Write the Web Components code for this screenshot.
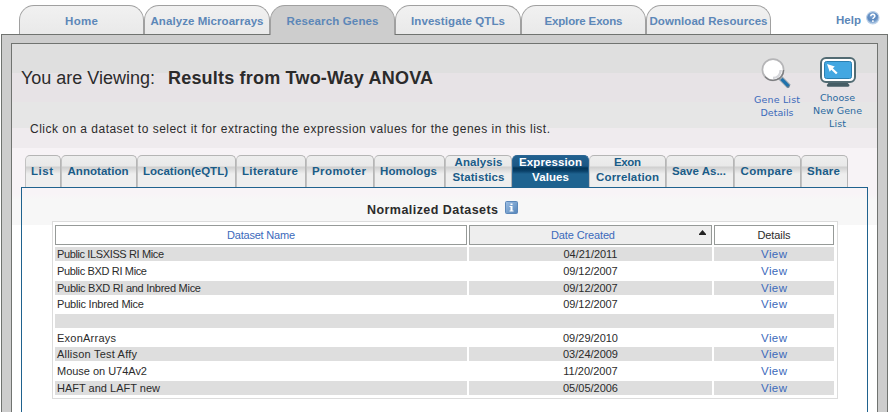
<!DOCTYPE html>
<html lang="en">
<head>
<meta charset="utf-8">
<title>Expression Values</title>
<style>
html,body{margin:0;height:412px;overflow:hidden;background:#fff;font-family:"Liberation Sans",Arial,sans-serif;font-size:11px;color:#2b2b2b}
</style>
</head>
<body>
<gene-page></gene-page>
<script>
const define=(name,html,setup)=>customElements.define(name,class extends HTMLElement{
  connectedCallback(){
    if(this.shadowRoot)return;
    this.attachShadow({mode:'open'}).innerHTML=typeof html==='function'?html(this):html;
    if(setup)setup(this);
  }
});

/* A single line of text tracked out to a given width */
define('fit-text',`<style>:host{display:inline-block;white-space:pre;text-align:left}span{display:inline-block}</style><span><slot></slot></span>`,el=>{
  const s=el.shadowRoot.querySelector('span'),w=+el.getAttribute('w')+1;
  const n=el.textContent.length;
  s.style.letterSpacing=(w-s.getBoundingClientRect().width)/(n-1)+'px';
  el.style.width=w+'px';
});

define('main-tab',`<style>
:host{display:flex;box-sizing:border-box;height:29px;justify-content:center;line-height:13px;padding-top:9px;font-size:11.5px;font-weight:bold;color:#5c87b8;border:1px solid #a0a0a0;border-width:1px 1px 0;border-radius:15px 15px 0 0;background:linear-gradient(#f1f1f1,#e9e9e9)}
:host([active]){background:#cdcdcd;height:30px;position:relative}
</style><slot></slot>`);

define('help-link',`<style>:host{display:flex;align-items:flex-start;gap:5px;font-size:11.5px;font-weight:bold;color:#5c87b8;line-height:13px}fit-text{margin-top:14px}svg{margin-top:11px}</style>
<fit-text w="24">Help</fit-text>
<svg width="14" height="14" viewBox="0 0 14 14"><defs><radialGradient id="g" cx=".45" cy=".3" r=".75"><stop offset="0" stop-color="#7ba4d4"/><stop offset=".55" stop-color="#5c88be"/><stop offset="1" stop-color="#c4daf0"/></radialGradient></defs><circle cx="6.8" cy="6.8" r="6.2" fill="url(#g)" stroke="#bdd2e9" stroke-width="1.1"/><path d="M4.8 5.2C4.9 2.6 9.2 2.8 8.8 5.3C8.6 6.5 6.9 6.6 6.9 8M6.9 9.3V10.9" fill="none" stroke="#fff" stroke-width="1.5"/></svg>`);

define('action-link',`<style>:host{display:flex;flex-direction:column;align-items:center;font:9.5px/13px "DejaVu Sans",sans-serif;color:var(--c)}</style><slot name="icon"></slot><slot></slot>`);

define('magnifier-icon',`<style>:host{display:block;height:35px}svg{display:block}</style>
<svg width="35" height="32" viewBox="0 0 35 32"><path d="M20 19.5L29 28.5" stroke="#98a5ae" stroke-width="5"/><path d="M21.5 21L28.7 28.3" stroke="#1e72ad" stroke-width="3.2"/><path d="M26.2 28.8L29 30L30 27.2" fill="#58748a"/><circle cx="13" cy="11.7" r="10.6" fill="#fff" stroke="#b5b5b7" stroke-width="1.7"/><path d="M5 18.6A10.6 10.6 0 0 0 23.6 12" fill="none" stroke="#7b7b7e" stroke-width="1.3"/><path d="M13 20C18 20 20.5 16 20.7 12" fill="none" stroke="#d5d6da" stroke-width="2.5"/></svg>`);

define('monitor-icon',`<style>:host{display:block;height:34px}svg{display:block}</style>
<svg width="36" height="30" viewBox="0 0 36 30"><path d="M10 24H26L29.5 28Q29.6 29.800 28 29.800H8Q6.500 29.800 6.800 28Z" fill="#455d65"/><rect x="1" y="1" width="34" height="24" rx="5" fill="#fff" stroke="#526b73" stroke-width="2"/><rect x="4.500" y="4.500" width="27" height="17" rx="2" fill="#42a7e1" stroke="#2b7fb0" stroke-width="1"/><path d="M7 7L14.8 9.600L12.800 11.200L17.600 15.700L16 17.300L11.300 12.700L9.700 14.700Z" fill="#fff"/></svg>`);

define('sub-tab',`<style>
:host{display:flex;flex-direction:column;box-sizing:border-box;height:32px;padding:8px 2px 0 0;align-items:center;line-height:14px;font-size:11.5px;font-weight:bold;color:#1a5c88;border:1px solid #b5b5b5;border-width:1px 1px 0;border-left-color:#c2c2c2;border-radius:5px 5px 0 0;background:linear-gradient(#eee 0,#e9e9e9 10px,#cfcfcf 11px,#dcdcdc 14px,#eee 18px,#eee)}
:host([two]){padding:0;line-height:15px}:host([two]) ::slotted(*){position:relative;top:-1px}
:host([active]){color:#fff;border-color:#2b6592;background:linear-gradient(#22618f 0,#1b5785 10px,#033658 12px,#0a4068 15px,#1f6390 18px,#1f6390)}
</style><slot></slot>`);

define('info-icon',`<style>:host{display:block;width:13px;height:13px}svg{display:block}</style>
<svg width="13" height="13"><defs><linearGradient id="g" x2="1" y2="1"><stop stop-color="#9dbfe4"/><stop offset="1" stop-color="#5585b9"/></linearGradient></defs><rect x=".5" y=".5" width="12" height="12" rx="1" fill="url(#g)" stroke="#5c88ba"/><path d="M5.500 2.500H7.500V4H5.500ZM4.500 5H7.500V9.500H8.500V10.500H4.500V9.500H5.500V6H4.500Z" fill="#fff"/></svg>`);

define('data-row',el=>{
  const [n,nw,d,dw]=(el.getAttribute('v')||'').split('|');
  return `<style>:host{display:grid;grid-template-columns:412px 243px 120px;column-gap:2px;height:14px;line-height:14px}
  div{text-align:center;height:14px}.n{text-align:left;padding-left:2px}
  :host([shade]) div{background:#dedede}.all{grid-column:1/4}fit-text{vertical-align:top}.v{color:#3b6abb;font-size:11.5px}</style>`+
  (n?`<div class="n"><fit-text w="${nw}">${n}</fit-text></div><div><fit-text w="${dw}">${d}</fit-text></div><div class="v"><fit-text w="25">View</fit-text></div>`:'<div class="all"></div>');
});

define('data-table',()=>{
  const rows=['Public ILSXISS RI Mice|106|04/21/2011|53','Public BXD RI Mice|89|09/12/2007|53.5','Public BXD RI and Inbred Mice|143|09/12/2007|53.5','Public Inbred Mice|86|09/12/2007|53.5','','ExonArrays|58|09/29/2010|54','Allison Test Affy|79|03/24/2009|54','Mouse on U74Av2|89|11/20/2007|53.5','HAFT and LAFT new|102|05/05/2006|54'];
  return `<style>:host{display:block;box-sizing:border-box;width:786px;height:178px;border:1px solid #dcdcdc;background:#fff;padding:3px 2px 0}
  .h{display:grid;grid-template-columns:412px 243px 120px;column-gap:2px;height:20px;margin-bottom:2px}
  .h div{border:1px solid #969a98;text-align:center;line-height:18px;color:#3b6abb;background:#fff}
  .h .s{background:#eee;display:flex;justify-content:space-between;padding-left:81px}.s svg{margin:4px 5px 0 0}
  .h .k{color:#2b2b2b}fit-text{vertical-align:top}
  .b{display:grid;grid-template-rows:17px 17px 16px 17px 17px 16px 17px 17px 14px}</style>
  <div class="h"><div><fit-text w="67">Dataset Name</fit-text></div><div class="s"><fit-text w="63">Date Created</fit-text><svg width="7" height="5"><path d="M0 5V4L3.500 0L7 4V5Z" fill="#222"/></svg></div><div class="k"><fit-text w="32">Details</fit-text></div></div>
  <div class="b">${rows.map((r,i)=>`<data-row ${i%2?'':'shade'} v="${r}"></data-row>`).join('')}</div>`;
});

define('gene-page',()=>{
  const T=(t,w)=>`<fit-text w="${w}">${t}</fit-text>`;
  const main=[['Home',32],['Analyze Microarrays',112],['Research Genes',91],['Investigate QTLs',93],['Explore Exons',77],['Download Resources',117]];
  const subs=[[['List',21]],[['Annotation',60]],[['Location(eQTL)',84]],[['Literature',55]],[['Promoter',53]],[['Homologs',56]],[['Analysis',47],['Statistics',51]],[['Expression',62],['Values',36]],[['Exon',26],['Correlation',62]],[['Save As...',53]],[['Compare',51]],[['Share',32]]];
  return `<style>
  :host{display:block;height:412px;overflow:hidden}
  nav{display:flex;justify-content:space-between;height:34px;padding:0 9px 0 19px}
  .tabs{display:grid;grid-template-columns:125px 126px 125px 126px 125px 125px;padding-top:5px;height:29px}
  .outer{box-sizing:border-box;width:887px;height:390px;margin-left:1px;border:1px solid #707370;background:#cdcdcd;padding:8px 9px 0}
  .inner{box-sizing:border-box;width:867px;height:390px;border:1px solid #707370;background:linear-gradient(#dfdfdf 29px,#e7e3e6 29px 58px,#e6e6e6 58px 84px,#efebee 84px 104px,#f7f3f6 104px 150px,#f7f7f7 156px 181px,#fff 181px)}
  header{display:flex;justify-content:space-between;height:111px}
  h1{font-size:18px;line-height:20px;margin:24px 0 0 9px;display:flex;gap:13px;font-weight:bold}
  h1 .l{font-weight:normal}
  p{font-size:12px;line-height:14px;margin:34px 0 0 18px}
  .acts{display:flex;gap:13px;padding:13px 15px 0 0}
  .acts action-link:first-child{padding-top:1px}
  .sub{display:grid;width:823px;margin-left:13px;grid-template-columns:36px 76px 99px 70px 68px 71px 67px 77px 77px 68px 67px 47px}
  section{box-sizing:border-box;width:847px;height:240px;margin-left:9px;border:1px solid #1f628e;padding-left:30px;background:linear-gradient(#f8f4f7 6px,#f7f7f7 12px 37px,#fff 37px)}
  h2{display:flex;gap:7px;height:33px;margin:0;padding-left:315px;font-size:12.5px;line-height:14px}
  h2 fit-text{margin-top:15px}h2 info-icon{margin-top:13px}
  </style>
  <nav><div class="tabs">${main.map((m,i)=>`<main-tab ${i==2?'active':''}>${T(...m)}</main-tab>`).join('')}</div><help-link></help-link></nav>
  <div class="outer"><div class="inner">
   <header><div><h1><fit-text class="l" w="133">You are Viewing:</fit-text>${T('Results from Two-Way ANOVA',264)}</h1>
   <p>${T('Click on a dataset to select it for extracting the expression values for the genes in this list.',519)}</p></div>
   <div class="acts"><action-link style="--c:#3b6abb"><magnifier-icon slot="icon"></magnifier-icon>${T('Gene List',45)}${T('Details',32)}</action-link>
   <action-link style="--c:#2a69a0"><monitor-icon slot="icon"></monitor-icon>${T('Choose',34)}${T('New Gene',48)}${T('List',16)}</action-link></div></header>
   <div class="sub">${subs.map((s,i)=>`<sub-tab ${s[1]?'two':''} ${i==7?'active':''}>${s.map(x=>T(...x)).join('')}</sub-tab>`).join('')}</div>
   <section><h2>${T('Normalized Datasets',130)}<info-icon></info-icon></h2><data-table></data-table></section>
  </div></div>`;
});
</script>
</body>
</html>
